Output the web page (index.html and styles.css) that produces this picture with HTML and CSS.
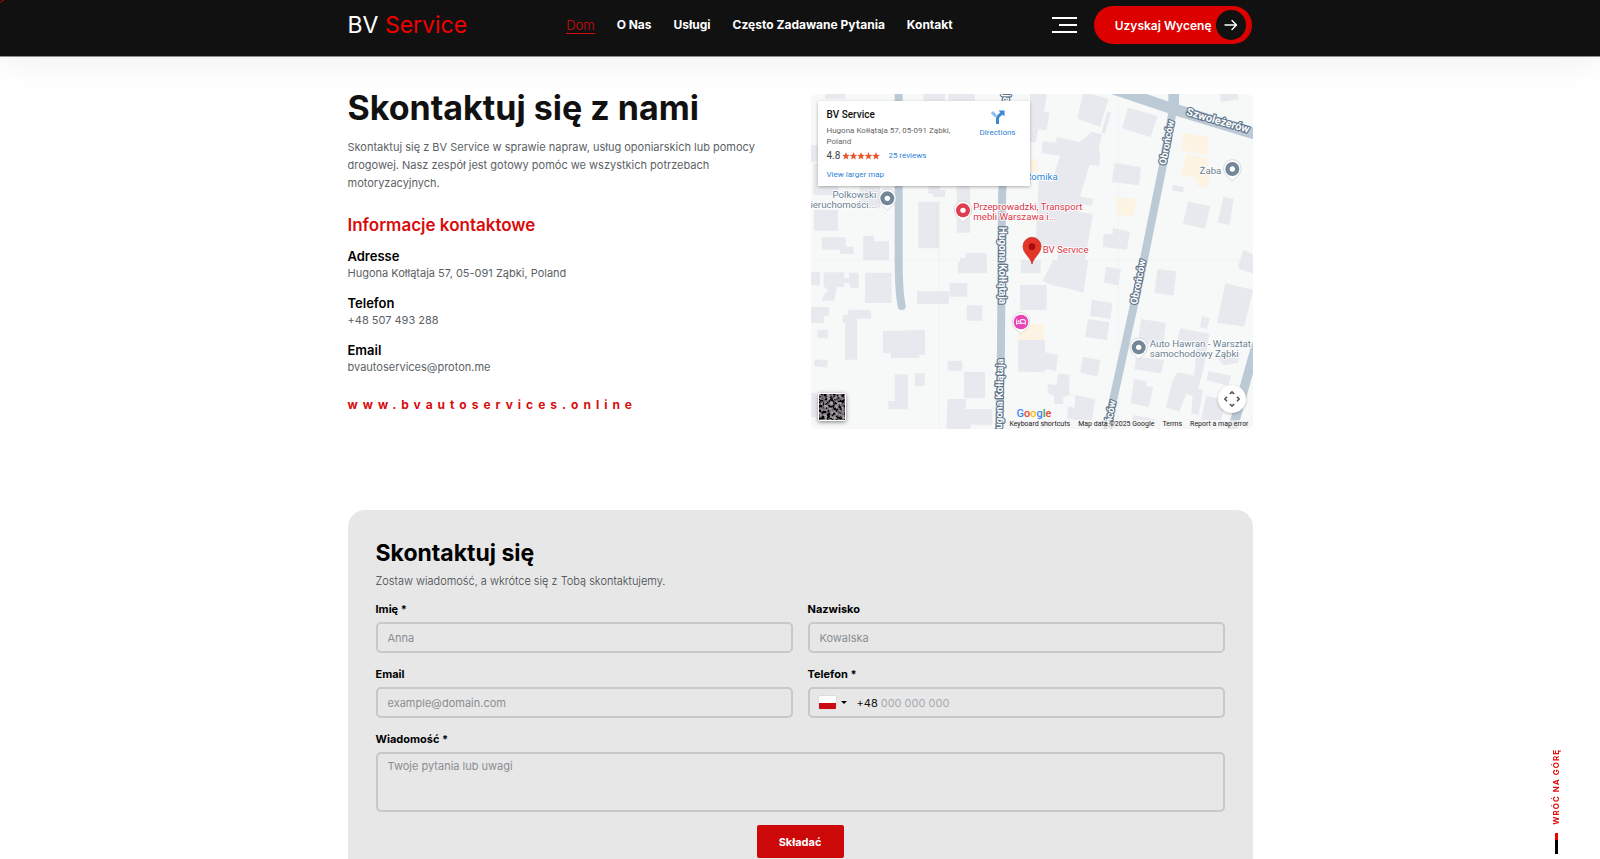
FILE: index.html
```html
<!DOCTYPE html>
<html lang="pl">
<head>
<meta charset="utf-8">
<meta name="viewport" content="width=device-width, initial-scale=1">
<title>BV Service – Kontakt</title>
<link rel="stylesheet" href="styles.css">
</head>
<body>
<header class="site-header">
  <div class="container header-row">
    <a class="logo" href="#">BV <span class="logo-accent">Service</span></a>
    <nav class="main-nav" aria-label="Menu główne">
      <a class="nav-link is-active" href="#">Dom</a>
      <a class="nav-link" href="#">O Nas</a>
      <a class="nav-link" href="#">Usługi</a>
      <a class="nav-link" href="#">Często Zadawane Pytania</a>
      <a class="nav-link" href="#">Kontakt</a>
    </nav>
    <div class="header-actions">
      <button class="menu-toggle" type="button" aria-label="Menu"><span class="menu-line"></span><span class="menu-line menu-line-short"></span><span class="menu-line"></span></button>
      <a class="quote-button" href="#">Uzyskaj Wycenę
        <span class="quote-icon"><svg width="14" height="12" viewBox="0 0 14 12" fill="none" stroke="#fff" stroke-width="1.4" stroke-linecap="round" stroke-linejoin="round"><path d="M1 6h11.5M8 1.5 12.5 6 8 10.5"/></svg></span>
      </a>
    </div>
  </div>
</header>

<main class="container">
  <section class="contact">
    <div class="contact-info">
      <h1 class="page-title">Skontaktuj się z nami</h1>
      <p class="lead">Skontaktuj się z BV Service w sprawie napraw, usług oponiarskich lub pomocy drogowej. Nasz zespół jest gotowy pomóc we wszystkich potrzebach motoryzacyjnych.</p>
      <h2 class="info-title">Informacje kontaktowe</h2>
      <dl class="info-list">
        <div class="info-item"><dt>Adresse</dt><dd>Hugona Kołłątaja 57, 05-091 Ząbki, Poland</dd></div>
        <div class="info-item"><dt>Telefon</dt><dd>+48 507 493 288</dd></div>
        <div class="info-item"><dt>Email</dt><dd>bvautoservices@proton.me</dd></div>
      </dl>
      <a class="site-url" href="#">www.bvautoservices.online</a>
    </div>

    <div class="map">
      <svg class="map-canvas" viewBox="0 0 1326 1005" preserveAspectRatio="xMidYMid slice" role="img" aria-label="Mapa">
        <defs>
          <path id="drop" d="M0 36C-6 27-26 20-26-2a26 26 0 0 1 52 0C26 20 6 27 0 36z"/>
        </defs>
        <rect width="1326" height="1005" fill="#f7f8f8"/>
        <path d="M0 499H1326M384 0V1005M922 0V1005" stroke="#eff0f1" stroke-width="2"/>
        <g class="buildings">
          <g transform="translate(-33 -27)">
            <path d="M75 27h60v14H75zM370 27h65v20h-65zM445 27h80v20h-80zM33 180h21v50H33zM40 235h75v95H40zM42 375h72v62H42zM65 457h72v28h24v22h-40v-13H65zM190 452h32v17h45v56h-77zM178 290h62v80h-62zM400 315h35v21h-35zM355 350h63v140h-63zM385 300h35v26h-35zM470 300h40v143h-40zM497 503h63v40h-80v-24h17z"/>
          </g>
          <g transform="translate(657 -27)">
            <path d="M0 27h50l-8 53 16 3-8 53-25-3-8 40-17-3zM160 20l76 22-26 83-68-24zM232 79l11 4-18 64-10-5zM294 68l89 25-22 64-85-27zM184 141l31 7-9 50 5 3-4 42-28-4-29 95 40 8-4 20-38-5-13 90-38 40-81 0 10-205 40 8 24-78-56-8 4-36 38 5 5-18 67 17zM254 234l79 12-6 55-81-10zM220 448h28v-19l52 11-9 54-72-8zM570 27h52l5 16-54 8zM430 299l32 8-3 15-33-6zM474 350l67 13-16 68-66-15zM580 335l31 6-12 79-36-8zM640 495l28 12v50l-45-10zM106 375l83 12-26 150H80z"/>
          </g>
          <g transform="translate(-33 498)">
            <path d="M33 37h27v39H33zM71 37h62v44h-22l-8 41H65l8-20 12-10-14-14zM147 38h29v47h-23l-6-16h-13V54h13zM195 38h80v91h-80zM474 5h87v35h-87zM351 94h96v38h-96zM449 69h53v41h-53zM500 136h47v46h-47zM33 141h55l-2 27H71v21H33zM145 149h68v27h-42v123h-36V189h-7v-24h17zM52 209h32v26H52zM44 298l40 3-2 22-40-4zM249 213l126-3v75h-17v9h-85v-14h-24zM284 343h40v105h-59v-25h19zM345 340h29v38h-29zM443 302h44v30h-44zM492 335h63v80h-63zM443 417h54v30h80v47h-65v16h-73zM33 398h14v73H33zM660 75h80v75h-80zM662 0h60v40h-60zM655 240h80v95h-80z"/>
          </g>
          <g transform="translate(657 498)">
            <path d="M0 76h46v44H30v30H0zM0 240h38v94H0zM70 0h105l-15 98-53-15-40-7-30-13zM228 20l45 8-8 48-43-8zM382 26l57 8-9 73-56-8zM586 70l83 20-26 110-82-12zM629 28l5-28h35v40zM186 120l62 9-7 48-61-9zM174 177l64 10-7 53-66-9zM516 168l24 8-10 31-20-5zM333 177l75 12-7 53-60 12-15-24zM318 290l85 10-10 40-80-12zM450 205l88 16-16 100-24 90-30-10-20 55-40-14 20-80 14-25 50 10 10-98-60-10zM45 277l39 8-6 48-36-7zM158 290l53 10-8 50-52-12zM84 340l36 5-3 30 3 30-20 5v22H72v-24l-20-8 2-28 26 3zM136 405l60 13-10 62h-50l-25-6 3-35 20 4zM312 356l36 8v14l22 4-14 59-54-12zM536 334l68 13-10 30-64-16zM528 408l60 12-15 60h-60zM490 385l30 5-14 75-22-5zM560 290l70-10-5 28-45 8zM312 465l70 15H305z"/>
          </g>
        </g>
        <g class="shops">
          <path d="M1116 116l78 14-8 52-75-14zM1127 180l68 14-8 38 14 5-15 45-30-8 2-22-50-10zM918 308l57 8-8 53-52-10zM650 195h30v38h-30zM622 690h76v48h-76z"/>
        </g>
        <g class="roads">
          <path stroke-width="24" d="M263 0V500Q263 590 272 636"/>
          <path stroke-width="24" d="M585-10C577 140 573 260 572 420L570 760 564 1015"/>
          <path stroke-width="34" d="M900-18 1087 45 1340 122"/>
          <path stroke-width="32" d="M1088-10V50"/>
          <path stroke-width="24" d="M1087 40 1054 223 997 505 902 938 886 1015"/>
          <path stroke-width="28" d="M1335 755 1262 1015"/>
        </g>
        <g class="road-labels">
          <text transform="translate(563 398) rotate(90)">Hugona Kołłątaja</text>
          <text text-anchor="end" transform="translate(577 25) rotate(90)">Hugona Kołłątaja</text>
          <text text-anchor="end" transform="translate(577 794) rotate(-89)">Hugona Kołłątaja</text>
          <text transform="translate(1064 214) rotate(-79)">Obrońców</text>
          <text transform="translate(978 632) rotate(-79)">Obrońców</text>
          <text text-anchor="end" transform="translate(915 920) rotate(-79)">Obrońców</text>
          <text class="road-label-main" transform="translate(1124 63) rotate(16)">Szwoleżerów</text>
        </g>
        <g class="pins">
          <g transform="translate(229 313)"><use href="#drop"/><circle r="21" fill="#738799"/><circle r="8" fill="#fff"/></g>
          <g transform="translate(456 349)"><use href="#drop"/><circle r="21" fill="#e03c50"/><circle r="8" fill="#fff"/></g>
          <g transform="translate(1264 225)"><use href="#drop"/><circle r="21" fill="#738799"/><circle r="8" fill="#fff"/></g>
          <g transform="translate(983 760)"><use href="#drop"/><circle r="21" fill="#738799"/><circle r="8" fill="#fff"/></g>
          <g transform="translate(630 684)"><use href="#drop"/><circle r="22" fill="#e844b8"/><path d="M-13-8v16M-13 4h26v4M13 4v-7q0-4-4-4h-10v11" fill="none" stroke="#fff" stroke-width="3"/><circle cx="-7" cy="-2" r="3" fill="#fff"/></g>
          <path d="M663 510C660 490 636 480 636 457a27 27 0 0 1 54 0C690 480 667 490 663 510z" fill="#e33629" stroke="#c5221f" stroke-width="2"/>
          <circle cx="663" cy="458" r="10" fill="#a50e0e"/>
        </g>
        <g class="place-labels">
          <text x="196" y="312" text-anchor="end">Polkowski</text>
          <text x="196" y="341" text-anchor="end">Nieruchomości...</text>
          <text x="1231" y="240" text-anchor="end">Żaba</text>
          <text x="1016" y="758">Auto Hawran - Warsztat</text>
          <text x="1016" y="788">samochodowy Ząbki</text>
          <text class="label-red" x="487" y="348">Przeprowadzki, Transport</text>
          <text class="label-red" x="487" y="377">mebli Warszawa i...</text>
          <text class="label-red" x="695" y="478">BV Service</text>
          <text class="label-blue" x="740" y="257" text-anchor="end">Romika</text>
        </g>
      </svg>
      <div class="map-card">
        <div class="map-card-main">
          <strong class="place-name">BV Service</strong>
          <span class="place-address">Hugona Kołłątaja 57, 05-091 Ząbki, Poland</span>
          <span class="place-rating"><span class="rating-value">4.8</span>
            <svg class="stars" width="38" height="8" viewBox="0 0 38 8" fill="#e7562e"><path id="star" d="M4 0l1 2.8 2.9.1-2.3 1.8.8 2.9L4 6 1.6 7.6l.8-2.9L.1 2.9 3 2.8z"/><use href="#star" x="7.5"/><use href="#star" x="15"/><use href="#star" x="22.5"/><use href="#star" x="30"/></svg>
            <a href="#">25 reviews</a></span>
          <a href="#">View larger map</a>
        </div>
        <a class="directions" href="#">
          <svg width="14" height="14" viewBox="0 0 14 14" fill="none"><path d="M1 2l4 4.500" stroke="#8fbff0" stroke-width="3"/><path d="M6.500 14V9Q6.500 7 8 5.500L11 3" stroke="#3d86d8" stroke-width="3"/><path d="M7.500.5H13.500V6.500z" fill="#3d86d8"/></svg>
          Directions
        </a>
      </div>
      <button class="satellite" type="button" aria-label="Widok satelitarny">
        <svg width="26" height="26" viewBox="0 0 26 26"><filter id="grain" x="0" y="0" width="1" height="1"><feTurbulence type="fractalNoise" baseFrequency=".35" numOctaves="3" seed="4"/><feColorMatrix values="1 0 0 0 -.36 1 0 0 0 -.37 1 0 0 0 -.36 0 0 0 0 1"/></filter><rect width="26" height="26" filter="url(#grain)"/></svg>
      </button>
      <button class="recenter" type="button" aria-label="Sterowanie kamerą">
        <svg width="16" height="16" viewBox="0 0 16 16" fill="none" stroke="#555" stroke-width="1.6"><path d="M5.800 3 8 .9 10.200 3M5.800 13 8 15.100 10.200 13M3 5.800.9 8 3 10.200M13 5.800 15.100 8 13 10.200"/></svg>
      </button>
      <div class="map-footer">
        <a class="google" href="#" aria-label="Google"><span class="g-blue">G</span><span class="g-red">o</span><span class="g-yellow">o</span><span class="g-blue">g</span><span class="g-green">l</span><span class="g-red">e</span></a>
        <div class="map-legal"><button type="button">Keyboard shortcuts</button><span>Map data ©2025 Google</span><a href="#">Terms</a><a href="#">Report a map error</a></div>
      </div>
    </div>
  </section>

  <form class="contact-form">
    <h2 class="form-title">Skontaktuj się</h2>
    <p class="form-note">Zostaw wiadomość, a wkrótce się z Tobą skontaktujemy.</p>
    <div class="form-grid">
      <div class="field"><label for="first">Imię *</label><input class="control" id="first" type="text" placeholder="Anna"></div>
      <div class="field"><label for="last">Nazwisko</label><input class="control" id="last" type="text" placeholder="Kowalska"></div>
      <div class="field"><label for="email">Email</label><input class="control" id="email" type="email" placeholder="example@domain.com"></div>
      <div class="field"><label for="phone">Telefon *</label>
        <div class="control phone">
          <button class="country" type="button" aria-label="Polska"><span class="flag"></span><span class="caret"></span></button>
          <span class="prefix">+48</span>
          <input class="phone-input" id="phone" type="tel" placeholder="000 000 000">
        </div>
      </div>
      <div class="field field-wide"><label for="message">Wiadomość *</label><textarea class="control message" id="message" placeholder="Twoje pytania lub uwagi"></textarea></div>
    </div>
    <button class="submit" type="submit">Składać</button>
  </form>
</main>

<a class="back-to-top" href="#"><span class="back-text">WRÓĆ NA GÓRĘ</span><span class="back-bar"></span></a>
<svg class="cursor-ring" width="8" height="6" viewBox="0 0 8 6" fill="none" stroke="#c00" aria-hidden="true"><circle cx="-5" cy="-12" r="15"/></svg>
</body>
</html>
```
FILE: styles.css
```css
* { box-sizing: border-box; }

body {
  margin: 0;
  background: #fff;
  color: #000;
  font-family: Inter, "Liberation Sans", sans-serif;
  font-size: 11px;
}

a { color: inherit; text-decoration: none; }
button { border: 0; padding: 0; background: none; color: inherit; font: inherit; cursor: pointer; }
h1, h2, p, dl, dd { margin: 0; }

.container { width: calc(100% - 48px); max-width: 905px; margin: 0 auto; }

/* Header */
.site-header {
  position: sticky;
  top: 0;
  z-index: 5;
  background: #111;
  border-bottom: 1px solid #8c8c8c;
  box-shadow: 0 10px 30px rgba(0, 0, 0, 0.05);
}
.header-row { display: flex; justify-content: space-between; align-items: center; padding: 6px 0 12px; }
.logo { color: #fff; font-size: 23px; line-height: 28px; }
.logo-accent { color: #f00000; }
.main-nav { display: flex; gap: 22px; }
.nav-link { color: #fff; font-size: 12px; font-weight: 700; line-height: 16px; border-bottom: 1px solid transparent; }
.nav-link.is-active { color: #d80c0c; font-size: 13px; font-weight: 300; border-color: #d80c0c; }
.header-actions { display: flex; align-items: center; gap: 17px; }
.menu-toggle { display: flex; flex-direction: column; align-items: flex-end; gap: 5px; }
.menu-line { width: 25px; height: 2px; background: #fff; }
.menu-line-short { width: 18px; }
.quote-button {
  display: flex;
  align-items: center;
  gap: 5px;
  height: 38px;
  padding: 0 6px 0 21px;
  border-radius: 19px;
  background: #dc0000;
  color: #fff;
  font-size: 12px;
  font-weight: 600;
  white-space: nowrap;
}
.quote-icon { display: grid; place-items: center; width: 30px; height: 30px; border-radius: 50%; background: #111; }

/* Contact section */
.contact { display: grid; grid-template-columns: minmax(0, 421fr) minmax(0, 442fr); gap: 42px; padding: 37px 0 81px; }
.contact-info { min-width: 0; }
.page-title { color: #111; font-size: 34px; line-height: 28px; font-weight: 700; }
.lead { margin-top: 16px; color: #5c6266; line-height: 18px; }
.info-title { margin-top: 21px; color: #d80c0c; font-size: 17px; line-height: 24px; font-weight: 600; }
.info-list { display: grid; gap: 14px; margin-top: 11px; }
.info-item dt { font-size: 13px; line-height: 17px; font-weight: 600; }
.info-item dd { color: #5c6266; line-height: 16px; }
.site-url { display: block; margin-top: 22px; color: #d80c0c; font-size: 12px; line-height: 16px; font-weight: 700; letter-spacing: 5px; }

/* Map */
.map { position: relative; min-height: 335px; border-radius: 6px; overflow: hidden; font-family: Roboto, sans-serif; font-size: 8px; line-height: 11px; }
.map-canvas { position: absolute; inset: 0; width: 100%; height: 100%; }
.buildings { fill: #e7e9ee; }
.shops { fill: #fcf3e2; }
.roads { fill: none; stroke: #bccad6; stroke-linecap: round; stroke-linejoin: round; }
.road-labels { fill: #fff; stroke: #60758a; stroke-width: 7px; paint-order: stroke; stroke-linejoin: round; font-size: 30px; font-weight: 700; }
.road-label-main { font-size: 33px; }
.pins use { fill: #fff; stroke: #c3c8cd; stroke-width: 2px; }
.place-labels { fill: #6b7f92; stroke: #fff; stroke-width: 5px; paint-order: stroke; stroke-linejoin: round; font-size: 29px; }
.label-red { fill: #dd3344; }
.label-blue { fill: #2f86dc; }
.map-card {
  position: absolute;
  top: 7px;
  left: 7px;
  display: flex;
  justify-content: space-between;
  width: 212px;
  height: 85px;
  padding: 7px 14px 6px 9px;
  background: #fff;
  box-shadow: 0 1px 3px rgba(0, 0, 0, 0.3);
  color: #666;
}
.map-card a { color: #2d82d7; }
.map-card-main { display: flex; flex-direction: column; width: 136px; }
.place-name { color: #111; font-size: 10px; line-height: 13px; font-weight: 500; }
.place-address { margin-top: 4px; }
.place-rating { display: flex; align-items: center; gap: 2px; margin: 2px 0 7px; }
.place-rating a { margin-left: 6px; }
.rating-value { font-size: 10px; line-height: 13px; color: #444; }
.directions { display: flex; flex-direction: column; align-items: center; gap: 3px; padding-top: 2px; }
.satellite { position: absolute; left: 7px; bottom: 8px; width: 28px; height: 28px; padding: 1px; background: #fff; border-radius: 2px; box-shadow: 0 1px 4px rgba(0, 0, 0, 0.5); }
.satellite svg, .recenter svg { display: block; }
.recenter { position: absolute; right: 7px; bottom: 16px; display: grid; place-items: center; width: 28px; height: 28px; border-radius: 50%; background: #fff; box-shadow: 0 1px 3px rgba(0, 0, 0, 0.25); }
.map-footer { position: absolute; right: 0; bottom: 0; display: flex; flex-direction: column; }
.google { align-self: flex-start; margin-left: 10px; font-size: 11px; line-height: 13px; font-weight: 500; }
.g-blue { color: #4285f4; }
.g-red { color: #ea4335; }
.g-yellow { color: #fbbc05; }
.g-green { color: #34a853; }
.map-legal { display: flex; gap: 8px; padding: 0 4px 0 3px; background: rgba(245, 245, 245, 0.7); color: #222; font-size: 7px; line-height: 9px; white-space: nowrap; }

/* Form */
.contact-form { padding: 28px; border-radius: 17px 17px 0 0; background: #e7e7e7; }
.form-title { font-size: 23px; line-height: 30px; font-weight: 700; }
.form-note { margin-top: 5px; color: #44474b; font-size: 11px; line-height: 16px; font-weight: 300; }
.form-grid { display: grid; grid-template-columns: 1fr 1fr; gap: 13px 15px; margin-top: 12px; }
.field { display: flex; flex-direction: column; gap: 5px; min-width: 0; }
.field-wide { grid-column: 1 / -1; }
.field label { font-size: 11px; line-height: 16px; font-weight: 700; }
.control { width: 100%; height: 31px; padding: 0 10px; border: 2px solid #c8c8c8; border-radius: 5px; background: transparent; color: #111; font: 11px/16px Inter, sans-serif; }
.control::placeholder { color: #8a8e92; opacity: 1; }
.message { display: block; height: 60px; padding-top: 4px; resize: none; }
.phone { display: flex; align-items: center; padding-left: 9px; }
.country { display: flex; align-items: center; gap: 5px; }
.flag { width: 17px; height: 13px; border-radius: 1px; background: linear-gradient(#fff 50%, #cc0a14 50%); box-shadow: 0 0 1px rgba(0, 0, 0, 0.4); }
.caret { border: 3px solid transparent; border-top-color: #000; border-bottom: 0; }
.prefix { margin: 0 3px 0 10px; }
.phone-input { flex: 1; min-width: 0; padding: 0; border: 0; background: none; font: inherit; outline: 0; }
.phone-input::placeholder { color: #a5a9ae; opacity: 1; }
.submit { display: block; min-width: 87px; height: 33px; margin: 13px auto 0; border-radius: 2px; background: #cc0808; color: #fff; font-size: 11px; font-weight: 700; }

/* Floating elements */
.back-to-top { position: fixed; right: 37px; bottom: 5px; display: flex; flex-direction: column; align-items: center; gap: 8px; }
.back-text { writing-mode: vertical-rl; transform: rotate(180deg); color: #e00c0c; font-size: 8px; line-height: 14px; font-weight: 700; letter-spacing: 1px; }
.back-bar { width: 3px; height: 21px; background: linear-gradient(#f00000 7px, #000 7px); }
.cursor-ring { position: fixed; top: 0; left: 0; z-index: 6; }
```
